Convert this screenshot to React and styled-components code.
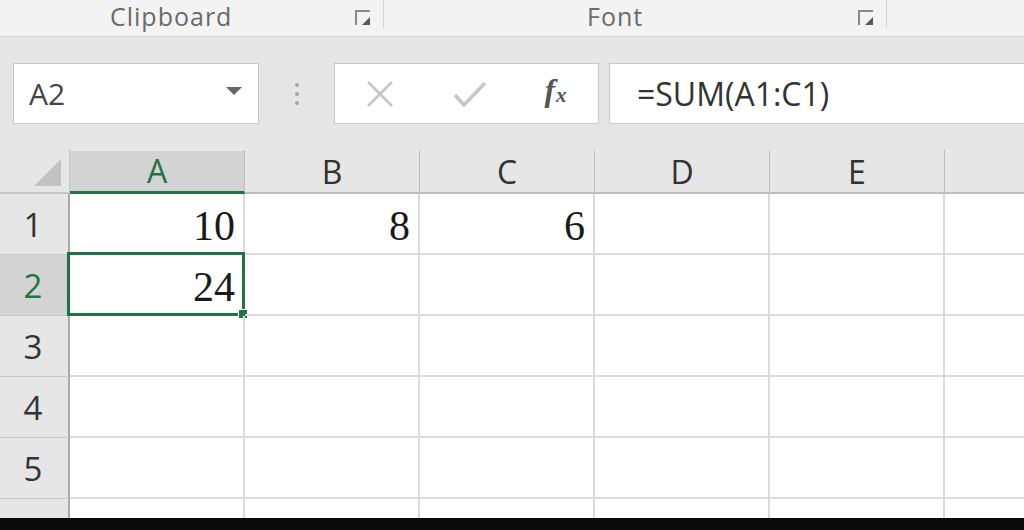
import styled, { createGlobalStyle } from "styled-components";

const GlobalStyle = createGlobalStyle`
  html, body {
    margin: 0;
    padding: 0;
    background: #ffffff;
  }
  body {
    font-family: "Open Sans", "Noto Sans", sans-serif;
  }
`;

const columns = ["A", "B", "C", "D", "E", ""];
const data = {
  1: { A: "10", B: "8", C: "6" },
  2: { A: "24" },
};
const rows = [1, 2, 3, 4, 5, ""];

export default function App() {
  return (
    <>
      <GlobalStyle />
      <Page>
        <Ribbon>
          <Group $width={384}>
            <GroupLabel $pad={110}>Clipboard</GroupLabel>
            <Launcher />
          </Group>
          <Group $width={503}>
            <GroupLabel $pad={203}>Font</GroupLabel>
            <Launcher />
          </Group>
        </Ribbon>

        <FormulaArea>
          <NameBox>
            <span>A2</span>
            <DropArrow />
          </NameBox>
          <Grip>
            <i />
            <i />
            <i />
          </Grip>
          <ButtonBox>
            <IconButton>
              <svg width="30" height="28" viewBox="0 0 30 28">
                <path d="M3 2 L27 26 M27 2 L3 26" stroke="#c6c6c6" strokeWidth="2.6" fill="none" />
              </svg>
            </IconButton>
            <IconButton>
              <svg width="34" height="28" viewBox="0 0 34 28">
                <path d="M2 15 L11 25 L32 3" stroke="#c6c6c6" strokeWidth="3.4" fill="none" />
              </svg>
            </IconButton>
            <Fx>
              f<sub>x</sub>
            </Fx>
          </ButtonBox>
          <FormulaInput>=SUM(A1:C1)</FormulaInput>
        </FormulaArea>

        <Sheet>
          <Corner>
            <CornerTriangle />
          </Corner>
          {columns.map((c, i) => (
            <ColHeader key={"h" + i} $active={c === "A"}>
              {c}
            </ColHeader>
          ))}
          {rows.map((r, ri) => (
            <Row key={"r" + ri} r={r} />
          ))}
        </Sheet>

        <BottomBar />
      </Page>
    </>
  );
}

function Row({ r }) {
  return (
    <>
      <RowHeader $active={r === 2} $last={r === ""}>
        {r}
      </RowHeader>
      {columns.map((c, i) => {
        const value = data[r] && data[r][c];
        const selected = r === 2 && c === "A";
        return (
          <Cell key={i} $last={r === ""}>
            {value}
            {selected && (
              <Selection>
                <FillHandle />
              </Selection>
            )}
          </Cell>
        );
      })}
    </>
  );
}

const Page = styled.div`
  width: 1024px;
  height: 530px;
  display: flex;
  flex-direction: column;
  overflow: hidden;
  background: #ffffff;
`;

const Ribbon = styled.div`
  height: 37px;
  flex: none;
  display: flex;
  background: #f3f3f3;
  border-bottom: 1px solid #d9d9d9;
  box-sizing: border-box;
`;

const Group = styled.div`
  width: ${(p) => p.$width}px;
  height: 29px;
  flex: none;
  display: flex;
  align-items: center;
  box-sizing: border-box;
  border-right: 1px solid #d4d4d4;
  position: relative;
`;

const GroupLabel = styled.span`
  padding-left: ${(p) => p.$pad}px;
  font-size: 25px;
  letter-spacing: 1px;
  color: #6a6a6a;
  line-height: 1;
  margin-top: 4px;
`;

const Launcher = styled.span`
  position: absolute;
  right: 13px;
  top: 10px;
  width: 15px;
  height: 15px;
  box-sizing: border-box;
  border-left: 2px solid #8a8a8a;
  border-top: 2px solid #8a8a8a;

  &::after {
    content: "";
    position: absolute;
    right: 0;
    bottom: 0;
    width: 0;
    height: 0;
    border-left: 8px solid transparent;
    border-bottom: 8px solid #5a5a5a;
  }
`;

const FormulaArea = styled.div`
  height: 112px;
  flex: none;
  box-sizing: border-box;
  background: #e6e6e6;
  display: flex;
  align-items: flex-start;
  padding: 26px 0 0 13px;
`;

const NameBox = styled.div`
  width: 246px;
  height: 61px;
  box-sizing: border-box;
  background: #ffffff;
  border: 1px solid #c8c8c8;
  display: flex;
  align-items: center;
  justify-content: space-between;
  padding: 0 16px 0 15px;
  font-size: 30px;
  color: #444444;
`;

const DropArrow = styled.span`
  width: 0;
  height: 0;
  border-left: 8px solid transparent;
  border-right: 8px solid transparent;
  border-top: 8px solid #666666;
  margin-top: -6px;
`;

const Grip = styled.div`
  width: 75px;
  height: 61px;
  display: flex;
  flex-direction: column;
  align-items: center;
  justify-content: center;
  gap: 5px;

  i {
    width: 4px;
    height: 4px;
    border-radius: 50%;
    background: #a6a6a6;
  }
`;

const ButtonBox = styled.div`
  width: 265px;
  height: 61px;
  box-sizing: border-box;
  background: #ffffff;
  border: 1px solid #c8c8c8;
  display: grid;
  grid-template-columns: 90px 90px 1fr;
  align-items: center;
  justify-items: center;
`;

const IconButton = styled.span`
  display: flex;
  align-items: center;
  justify-content: center;
`;

const Fx = styled.span`
  font-family: "Liberation Serif", "DejaVu Serif", serif;
  font-style: italic;
  font-weight: bold;
  font-size: 32px;
  color: #555555;
  margin-left: -2px;
  margin-top: -6px;

  sub {
    font-size: 21px;
    vertical-align: -1px;
    margin-left: 1px;
  }
`;

const FormulaInput = styled.div`
  flex: 1;
  height: 61px;
  margin-left: 10px;
  box-sizing: border-box;
  background: #ffffff;
  border: 1px solid #c8c8c8;
  border-right: none;
  display: flex;
  align-items: center;
  padding-left: 27px;
  font-size: 32px;
  color: #333333;
`;

const Sheet = styled.div`
  flex: 1;
  display: grid;
  grid-template-columns: 70px repeat(6, 175px);
  grid-template-rows: 45px repeat(5, 61px) 1fr;
  background: #ffffff;
  min-height: 0;
`;

const Corner = styled.div`
  background: #e6e6e6;
  border-bottom: 2px solid #c6c6c6;
  border-right: 1px solid #c6c6c6;
  box-sizing: border-box;
  position: relative;
`;

const CornerTriangle = styled.span`
  position: absolute;
  right: 8px;
  bottom: 6px;
  width: 0;
  height: 0;
  border-left: 27px solid transparent;
  border-bottom: 27px solid #c2c2c2;
`;

const ColHeader = styled.div`
  background: ${(p) => (p.$active ? "#d3d3d3" : "#e6e6e6")};
  border-bottom: ${(p) => (p.$active ? "3px solid #217346" : "2px solid #bdbdbd")};
  border-right: 1px solid #bdbdbd;
  box-sizing: border-box;
  display: flex;
  align-items: center;
  justify-content: center;
  font-size: 32px;
  line-height: 1;
  color: ${(p) => (p.$active ? "#217346" : "#333333")};
  border-top: 2px solid #e9e9e9;
`;

const RowHeader = styled.div`
  background: ${(p) => (p.$active ? "#d3d3d3" : "#e6e6e6")};
  border-right: 2px solid #a9a9a9;
  border-bottom: ${(p) => (p.$last ? "none" : "1px solid #c9c9c9")};
  box-sizing: border-box;
  display: flex;
  align-items: center;
  justify-content: center;
  padding-right: 2px;
  font-size: 33px;
  line-height: 1;
  color: ${(p) => (p.$active ? "#217346" : "#333333")};
`;

const Cell = styled.div`
  position: relative;
  border-right: 2px solid #dadada;
  border-bottom: ${(p) => (p.$last ? "none" : "2px solid #dadada")};
  box-sizing: border-box;
  display: flex;
  align-items: center;
  justify-content: flex-end;
  padding: 4px 8px 0 0;
  font-family: "Liberation Serif", "Times New Roman", serif;
  font-size: 42px;
  line-height: 1;
  color: #1a1a1a;
`;

const Selection = styled.span`
  position: absolute;
  left: -3px;
  top: -3px;
  right: -2px;
  bottom: -2px;
  border: 3px solid #217346;
  pointer-events: none;
`;

const FillHandle = styled.span`
  position: absolute;
  right: -6px;
  bottom: -6px;
  width: 8px;
  height: 8px;
  background: #217346;
  border: 1px solid #ffffff;
`;

const BottomBar = styled.div`
  height: 12px;
  flex: none;
  background: #0a0a0a;
`;
